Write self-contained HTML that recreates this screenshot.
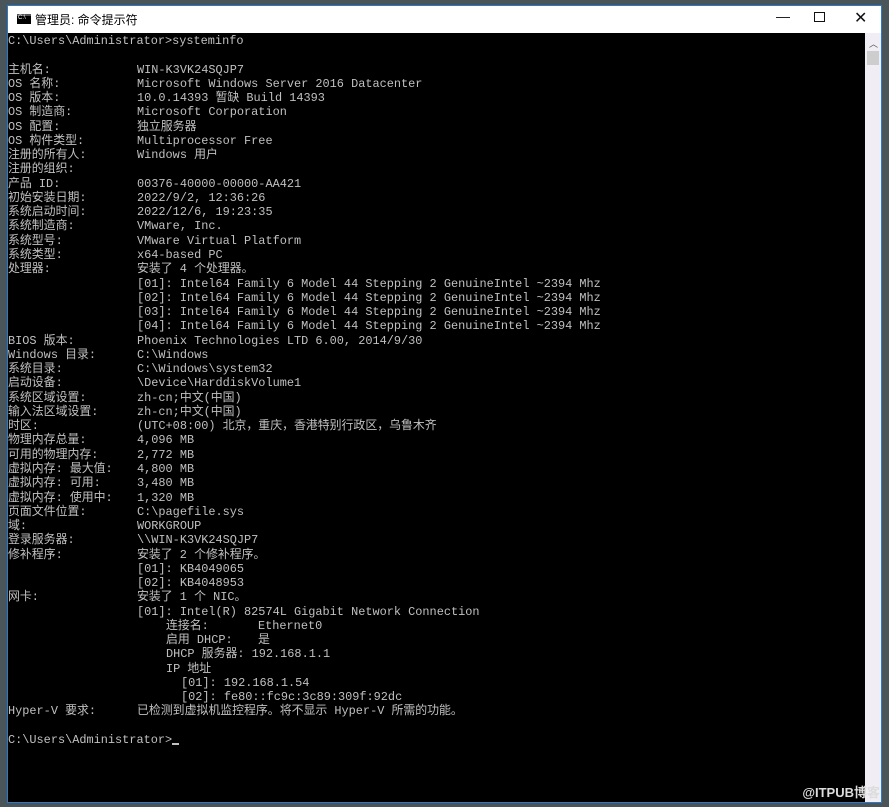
<!DOCTYPE html>
<html><head><meta charset="utf-8"><style>
*{margin:0;padding:0;box-sizing:border-box}
body{width:889px;height:807px;background:#4a5559;position:relative;overflow:hidden;font-family:"Liberation Mono","Noto Sans CJK SC",monospace}
.win{position:absolute;left:7px;top:5px;width:875px;height:798px;background:#fff;border:1px solid #2b79c9}
.title{position:absolute;left:0;top:0;width:873px;height:27px;background:#fff;font-family:"Liberation Sans","Noto Sans CJK SC",sans-serif;font-size:12px;color:#000}
.title .ic{position:absolute;left:9px;top:8px;width:14px;height:10px;background:#000;border-top:2px solid #555}
.title .ic:after{content:"C:\\";position:absolute;left:1px;top:-1px;color:#fff;font-size:6px}
.title .t{position:absolute;left:27px;top:5px}
.ctl{position:absolute;top:4px;font-size:14px;color:#111}
.con{position:absolute;left:0;top:27px;width:857px;height:769px;background:#000;color:#c0c0c0;font-size:11.9px;overflow:hidden;padding-top:1px}
.sb{position:absolute;left:857px;top:27px;width:16px;height:769px;background:#f0eef4}
.sb .a{position:absolute;left:4px;top:4px;font-size:9px;color:#555}
.sb .th{position:absolute;left:2px;top:18px;width:12px;height:14px;background:#cdcdcd}
.l{position:relative;height:14.27px;line-height:14.27px;white-space:pre}
.l b,.l i{font-weight:normal;font-style:normal;position:absolute;top:0}
.l b{left:0}
.wm{position:absolute;right:9px;bottom:6px;color:#ddd;font-family:"Liberation Sans","Noto Sans CJK SC",sans-serif;font-size:13px;font-weight:bold}
.cur{display:inline-block;width:7px;height:2px;background:#c0c0c0;vertical-align:-2px}
</style></head><body>
<div class="win">
<div class="title"><div class="ic"></div><div class="t">管理员: 命令提示符</div>
<div class="ctl" style="left:768px;top:2px">—</div>
<div class="ctl" style="left:806px;top:6px;width:11px;height:10px;border:1px solid #111"></div>
<div class="ctl" style="left:846px;top:2px;font-size:16px">✕</div>
</div>
<div class="con">
<div class="l"><b>C:\Users\Administrator&gt;systeminfo</b></div>
<div class="l"></div>
<div class="l"><b>主机名:</b><i style="left:129px">WIN-K3VK24SQJP7</i></div>
<div class="l"><b>OS 名称:</b><i style="left:129px">Microsoft Windows Server 2016 Datacenter</i></div>
<div class="l"><b>OS 版本:</b><i style="left:129px">10.0.14393 暂缺 Build 14393</i></div>
<div class="l"><b>OS 制造商:</b><i style="left:129px">Microsoft Corporation</i></div>
<div class="l"><b>OS 配置:</b><i style="left:129px">独立服务器</i></div>
<div class="l"><b>OS 构件类型:</b><i style="left:129px">Multiprocessor Free</i></div>
<div class="l"><b>注册的所有人:</b><i style="left:129px">Windows 用户</i></div>
<div class="l"><b>注册的组织:</b></div>
<div class="l"><b>产品 ID:</b><i style="left:129px">00376-40000-00000-AA421</i></div>
<div class="l"><b>初始安装日期:</b><i style="left:129px">2022/9/2, 12:36:26</i></div>
<div class="l"><b>系统启动时间:</b><i style="left:129px">2022/12/6, 19:23:35</i></div>
<div class="l"><b>系统制造商:</b><i style="left:129px">VMware, Inc.</i></div>
<div class="l"><b>系统型号:</b><i style="left:129px">VMware Virtual Platform</i></div>
<div class="l"><b>系统类型:</b><i style="left:129px">x64-based PC</i></div>
<div class="l"><b>处理器:</b><i style="left:129px">安装了 4 个处理器。</i></div>
<div class="l"><i style="left:129px">[01]: Intel64 Family 6 Model 44 Stepping 2 GenuineIntel ~2394 Mhz</i></div>
<div class="l"><i style="left:129px">[02]: Intel64 Family 6 Model 44 Stepping 2 GenuineIntel ~2394 Mhz</i></div>
<div class="l"><i style="left:129px">[03]: Intel64 Family 6 Model 44 Stepping 2 GenuineIntel ~2394 Mhz</i></div>
<div class="l"><i style="left:129px">[04]: Intel64 Family 6 Model 44 Stepping 2 GenuineIntel ~2394 Mhz</i></div>
<div class="l"><b>BIOS 版本:</b><i style="left:129px">Phoenix Technologies LTD 6.00, 2014/9/30</i></div>
<div class="l"><b>Windows 目录:</b><i style="left:129px">C:\Windows</i></div>
<div class="l"><b>系统目录:</b><i style="left:129px">C:\Windows\system32</i></div>
<div class="l"><b>启动设备:</b><i style="left:129px">\Device\HarddiskVolume1</i></div>
<div class="l"><b>系统区域设置:</b><i style="left:129px">zh-cn;中文(中国)</i></div>
<div class="l"><b>输入法区域设置:</b><i style="left:129px">zh-cn;中文(中国)</i></div>
<div class="l"><b>时区:</b><i style="left:129px">(UTC+08:00) 北京，重庆，香港特别行政区，乌鲁木齐</i></div>
<div class="l"><b>物理内存总量:</b><i style="left:129px">4,096 MB</i></div>
<div class="l"><b>可用的物理内存:</b><i style="left:129px">2,772 MB</i></div>
<div class="l"><b>虚拟内存: 最大值:</b><i style="left:129px">4,800 MB</i></div>
<div class="l"><b>虚拟内存: 可用:</b><i style="left:129px">3,480 MB</i></div>
<div class="l"><b>虚拟内存: 使用中:</b><i style="left:129px">1,320 MB</i></div>
<div class="l"><b>页面文件位置:</b><i style="left:129px">C:\pagefile.sys</i></div>
<div class="l"><b>域:</b><i style="left:129px">WORKGROUP</i></div>
<div class="l"><b>登录服务器:</b><i style="left:129px">\\WIN-K3VK24SQJP7</i></div>
<div class="l"><b>修补程序:</b><i style="left:129px">安装了 2 个修补程序。</i></div>
<div class="l"><i style="left:129px">[01]: KB4049065</i></div>
<div class="l"><i style="left:129px">[02]: KB4048953</i></div>
<div class="l"><b>网卡:</b><i style="left:129px">安装了 1 个 NIC。</i></div>
<div class="l"><i style="left:129px">[01]: Intel(R) 82574L Gigabit Network Connection</i></div>
<div class="l"><i style="left:158px">连接名:</i><i style="left:250px">Ethernet0</i></div>
<div class="l"><i style="left:158px">启用 DHCP:</i><i style="left:250px">是</i></div>
<div class="l"><i style="left:158px">DHCP 服务器: 192.168.1.1</i></div>
<div class="l"><i style="left:158px">IP 地址</i></div>
<div class="l"><i style="left:173px">[01]: 192.168.1.54</i></div>
<div class="l"><i style="left:173px">[02]: fe80::fc9c:3c89:309f:92dc</i></div>
<div class="l"><b>Hyper-V 要求:</b><i style="left:129px">已检测到虚拟机监控程序。将不显示 Hyper-V 所需的功能。</i></div>
<div class="l"></div>
<div class="l"><b>C:\Users\Administrator&gt;<span class="cur"></span></b></div>
</div>
<div class="sb"><div class="a">︿</div><div class="th"></div></div>
</div>
<div class="wm">@ITPUB博客</div>
</body></html>
